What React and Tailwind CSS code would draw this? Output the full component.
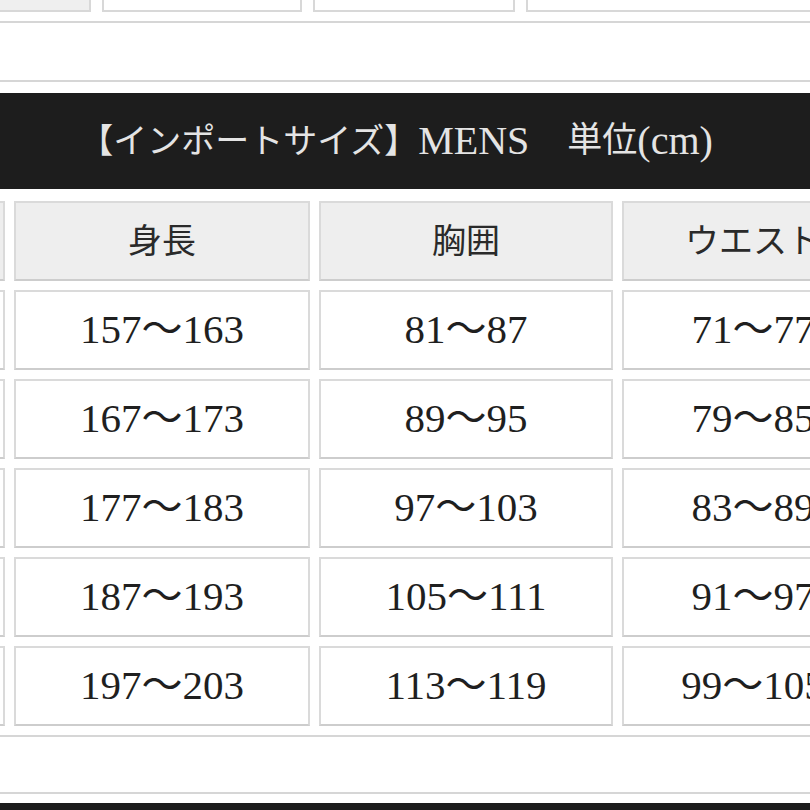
import React from 'react';

const serif = { fontFamily: '"Liberation Serif", "Noto Sans CJK JP", serif' };

const rows = [
    ['157〜163', '81〜87', '71〜77'],
    ['167〜173', '89〜95', '79〜85'],
    ['177〜183', '97〜103', '83〜89'],
    ['187〜193', '105〜111', '91〜97'],
    ['197〜203', '113〜119', '99〜105'],
];

function Cell({ children, head, className = '' }) {
    return (
        <div
            className={`h-[80px] shrink-0 flex items-center justify-center border-2 border-[#dadada] border-b-[#cdcdcd] ${head ? 'bg-[#eeeeee] text-[34px] text-[#2a2a2a]' : 'bg-white text-[41px] text-[#1f1f1f]'} whitespace-nowrap ${className}`}
        >
            {children}
        </div>
    );
}

function Row({ cells, head }) {
    return (
        <div className="flex gap-[9px] -ml-[291px]">
            <Cell head={head} className="w-[296px]" />
            <Cell head={head} className="w-[296px]">{cells[0]}</Cell>
            <Cell head={head} className="w-[294px]">{cells[1]}</Cell>
            <Cell head={head} className="w-[262px]">{cells[2]}</Cell>
        </div>
    );
}

export default function App() {
    return (
        <div className="w-[810px] h-[810px] overflow-hidden bg-white flex flex-col" style={serif}>
            {/* previous table, cut off */}
            <div className="flex gap-[11px] h-[12px] shrink-0">
                <div className="w-[91px] shrink-0 bg-[#efefef] border-2 border-t-0 border-l-0 border-[#d8d8d8]" />
                <div className="w-[200px] shrink-0 border-2 border-t-0 border-[#d8d8d8]" />
                <div className="w-[202px] shrink-0 border-2 border-t-0 border-[#d8d8d8]" />
                <div className="w-[300px] shrink-0 border-2 border-t-0 border-[#d8d8d8]" />
            </div>
            <div className="mt-[9px] h-[2px] shrink-0 bg-[#d6d6d6]" />

            {/* size table */}
            <div className="mt-[57px] h-[2px] shrink-0 bg-[#d6d6d6]" />
            <div className="mt-[11px] h-[96px] shrink-0 bg-[#1d1d1d] flex items-center justify-center pr-[18px] text-[#e4e4e4] whitespace-nowrap">
                <span className="text-[34px]">【インポートサイズ】</span>
                <span className="text-[40px]">MENS</span>
                <span className="w-[38px]" />
                <span className="text-[35px]">単位</span>
                <span className="text-[40px]">(cm)</span>
            </div>
            <div className="mt-[12px] flex flex-col gap-[9px]">
                <Row head cells={['身長', '胸囲', 'ウエスト']} />
                {rows.map((r, i) => (
                    <Row key={i} cells={r} />
                ))}
            </div>
            <div className="mt-[9px] h-[2px] shrink-0 bg-[#d6d6d6]" />

            {/* next table */}
            <div className="mt-[55px] h-[2px] shrink-0 bg-[#d6d6d6]" />
            <div className="mt-[9px] h-[20px] shrink-0 bg-[#1d1d1d]" />
        </div>
    );
}
